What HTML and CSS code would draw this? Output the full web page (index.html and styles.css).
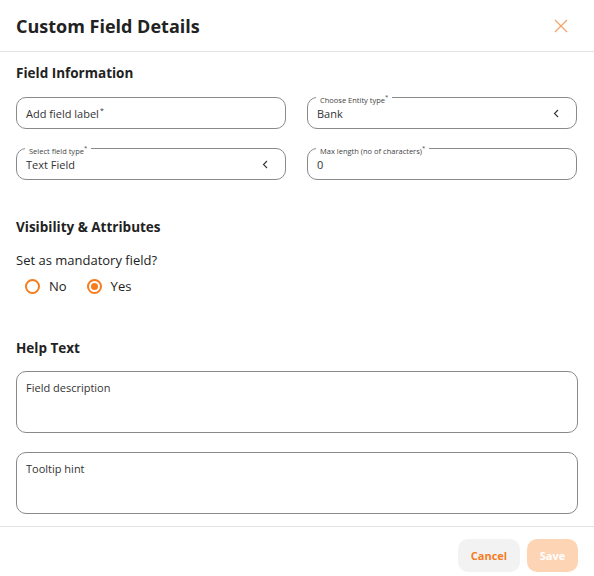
FILE: index.html
```html
<!DOCTYPE html>
<html lang="en">
<head>
  <meta charset="UTF-8">
  <meta name="viewport" content="width=device-width, initial-scale=1.0">
  <title>Custom Field Details</title>
  <link rel="stylesheet" href="styles.css">
</head>
<body>
  <div class="modal">
    <div class="modal-header">
      <h2>Custom Field Details</h2>
      <button class="close" aria-label="Close">
        <svg width="14" height="14" viewBox="0 0 14 14">
          <path d="M1 1 L13 13 M13 1 L1 13" stroke="#f5a26a" stroke-width="1.2" fill="none"/>
        </svg>
      </button>
    </div>

    <div class="modal-body">
      <h3>Field Information</h3>
      <div class="field-grid">
        <div class="field">
          <span class="placeholder">Add field label<sup>*</sup></span>
        </div>
        <div class="field">
          <span class="float-label">Choose Entity type<sup>*</sup></span>
          <span class="value">Bank</span>
          <svg class="chevron" width="6" height="9" viewBox="0 0 6 9">
            <path d="M5 1 L1.5 4.5 L5 8" stroke="#333" stroke-width="1.1" fill="none"/>
          </svg>
        </div>
        <div class="field">
          <span class="float-label">Select field type<sup>*</sup></span>
          <span class="value">Text Field</span>
          <svg class="chevron" width="6" height="9" viewBox="0 0 6 9">
            <path d="M5 1 L1.5 4.5 L5 8" stroke="#333" stroke-width="1.1" fill="none"/>
          </svg>
        </div>
        <div class="field">
          <span class="float-label">Max length (no of characters)<sup>*</sup></span>
          <span class="value">0</span>
        </div>
      </div>

      <h3 class="section-gap">Visibility &amp; Attributes</h3>
      <p class="question">Set as mandatory field?</p>
      <div class="radios">
        <label class="radio"><span class="dot"></span>No</label>
        <label class="radio"><span class="dot checked"></span>Yes</label>
      </div>

      <h3 class="help-title">Help Text</h3>
      <div class="textarea">Field description</div>
      <div class="textarea">Tooltip hint</div>
    </div>

    <div class="modal-footer">
      <button class="btn btn-cancel">Cancel</button>
      <button class="btn btn-save">Save</button>
    </div>
  </div>
</body>
</html>
```

FILE: styles.css
```css
body {
  margin: 0;
  font-family: "Open Sans", Lato, sans-serif;
  color: #222;
  background: #fff;
}
.modal {
  width: 594px;
}
.modal-header {
  height: 52px;
  box-sizing: border-box;
  padding: 0 16px;
  display: flex;
  align-items: center;
  justify-content: space-between;
  border-bottom: 1px solid #e3e3e3;
}
.modal-header h2 {
  margin: 0;
  font-size: 18px;
  font-weight: 700;
  color: #222;
}
.close {
  background: none;
  border: none;
  padding: 0;
  margin-right: 10px;
  width: 14px;
  height: 14px;
  cursor: pointer;
}
.modal-body {
  height: 475px;
  box-sizing: border-box;
  padding: 12px 16px 0;
  border-bottom: 1px solid #e3e3e3;
}
.modal-body h3 {
  margin: 0 0 15px;
  font-size: 13.5px;
  font-weight: 700;
  color: #222;
}
.field-grid {
  display: grid;
  grid-template-columns: 270px 270px;
  column-gap: 21px;
  row-gap: 19px;
}
.field {
  position: relative;
  height: 32px;
  box-sizing: border-box;
  border: 1px solid #8a8a8a;
  border-radius: 10px;
  padding: 0 9px;
  display: flex;
  align-items: center;
  font-size: 11px;
  color: #333;
}
.field sup {
  font-size: 7px;
  margin-left: 1px;
}
.float-label {
  position: absolute;
  top: -6px;
  left: 8px;
  padding: 0 4px;
  background: #fff;
  font-size: 7.5px;
  color: #444;
  line-height: 10px;
}
.float-label sup {
  font-size: 6px;
  margin-left: 0;
}
.value {
  flex: 1;
}
.chevron {
  margin-right: 8px;
}
.modal-body .section-gap {
  margin-top: 38px;
}
.question {
  margin: 0 0 8px;
  font-size: 13px;
  color: #222;
}
.radios {
  display: flex;
  gap: 20px;
  padding-left: 9px;
}
.radio {
  display: flex;
  align-items: center;
  gap: 9px;
  font-size: 13px;
  color: #222;
}
.dot {
  width: 11px;
  height: 11px;
  border: 2px solid #f57c1f;
  border-radius: 50%;
  display: flex;
  align-items: center;
  justify-content: center;
}
.dot.checked::after {
  content: "";
  width: 7px;
  height: 7px;
  border-radius: 50%;
  background: #f57c1f;
}
.modal-body .help-title {
  margin-top: 44px;
  margin-bottom: 14px;
}
.textarea {
  height: 62px;
  box-sizing: border-box;
  border: 1px solid #8a8a8a;
  border-radius: 10px;
  padding: 8px 9px;
  font-size: 11px;
  color: #333;
  margin-bottom: 19px;
}
.modal-footer {
  padding: 12px 16px 0;
  display: flex;
  justify-content: flex-end;
  gap: 7px;
}
.btn {
  height: 33px;
  border: none;
  border-radius: 10px;
  font-family: "Open Sans", Lato, sans-serif;
  font-size: 11px;
  font-weight: 700;
  cursor: pointer;
}
.btn-cancel {
  width: 62px;
  background: #f2f2f2;
  color: #f57c1f;
}
.btn-save {
  width: 51px;
  background: #fdd5b4;
  color: #fff;
}
```
